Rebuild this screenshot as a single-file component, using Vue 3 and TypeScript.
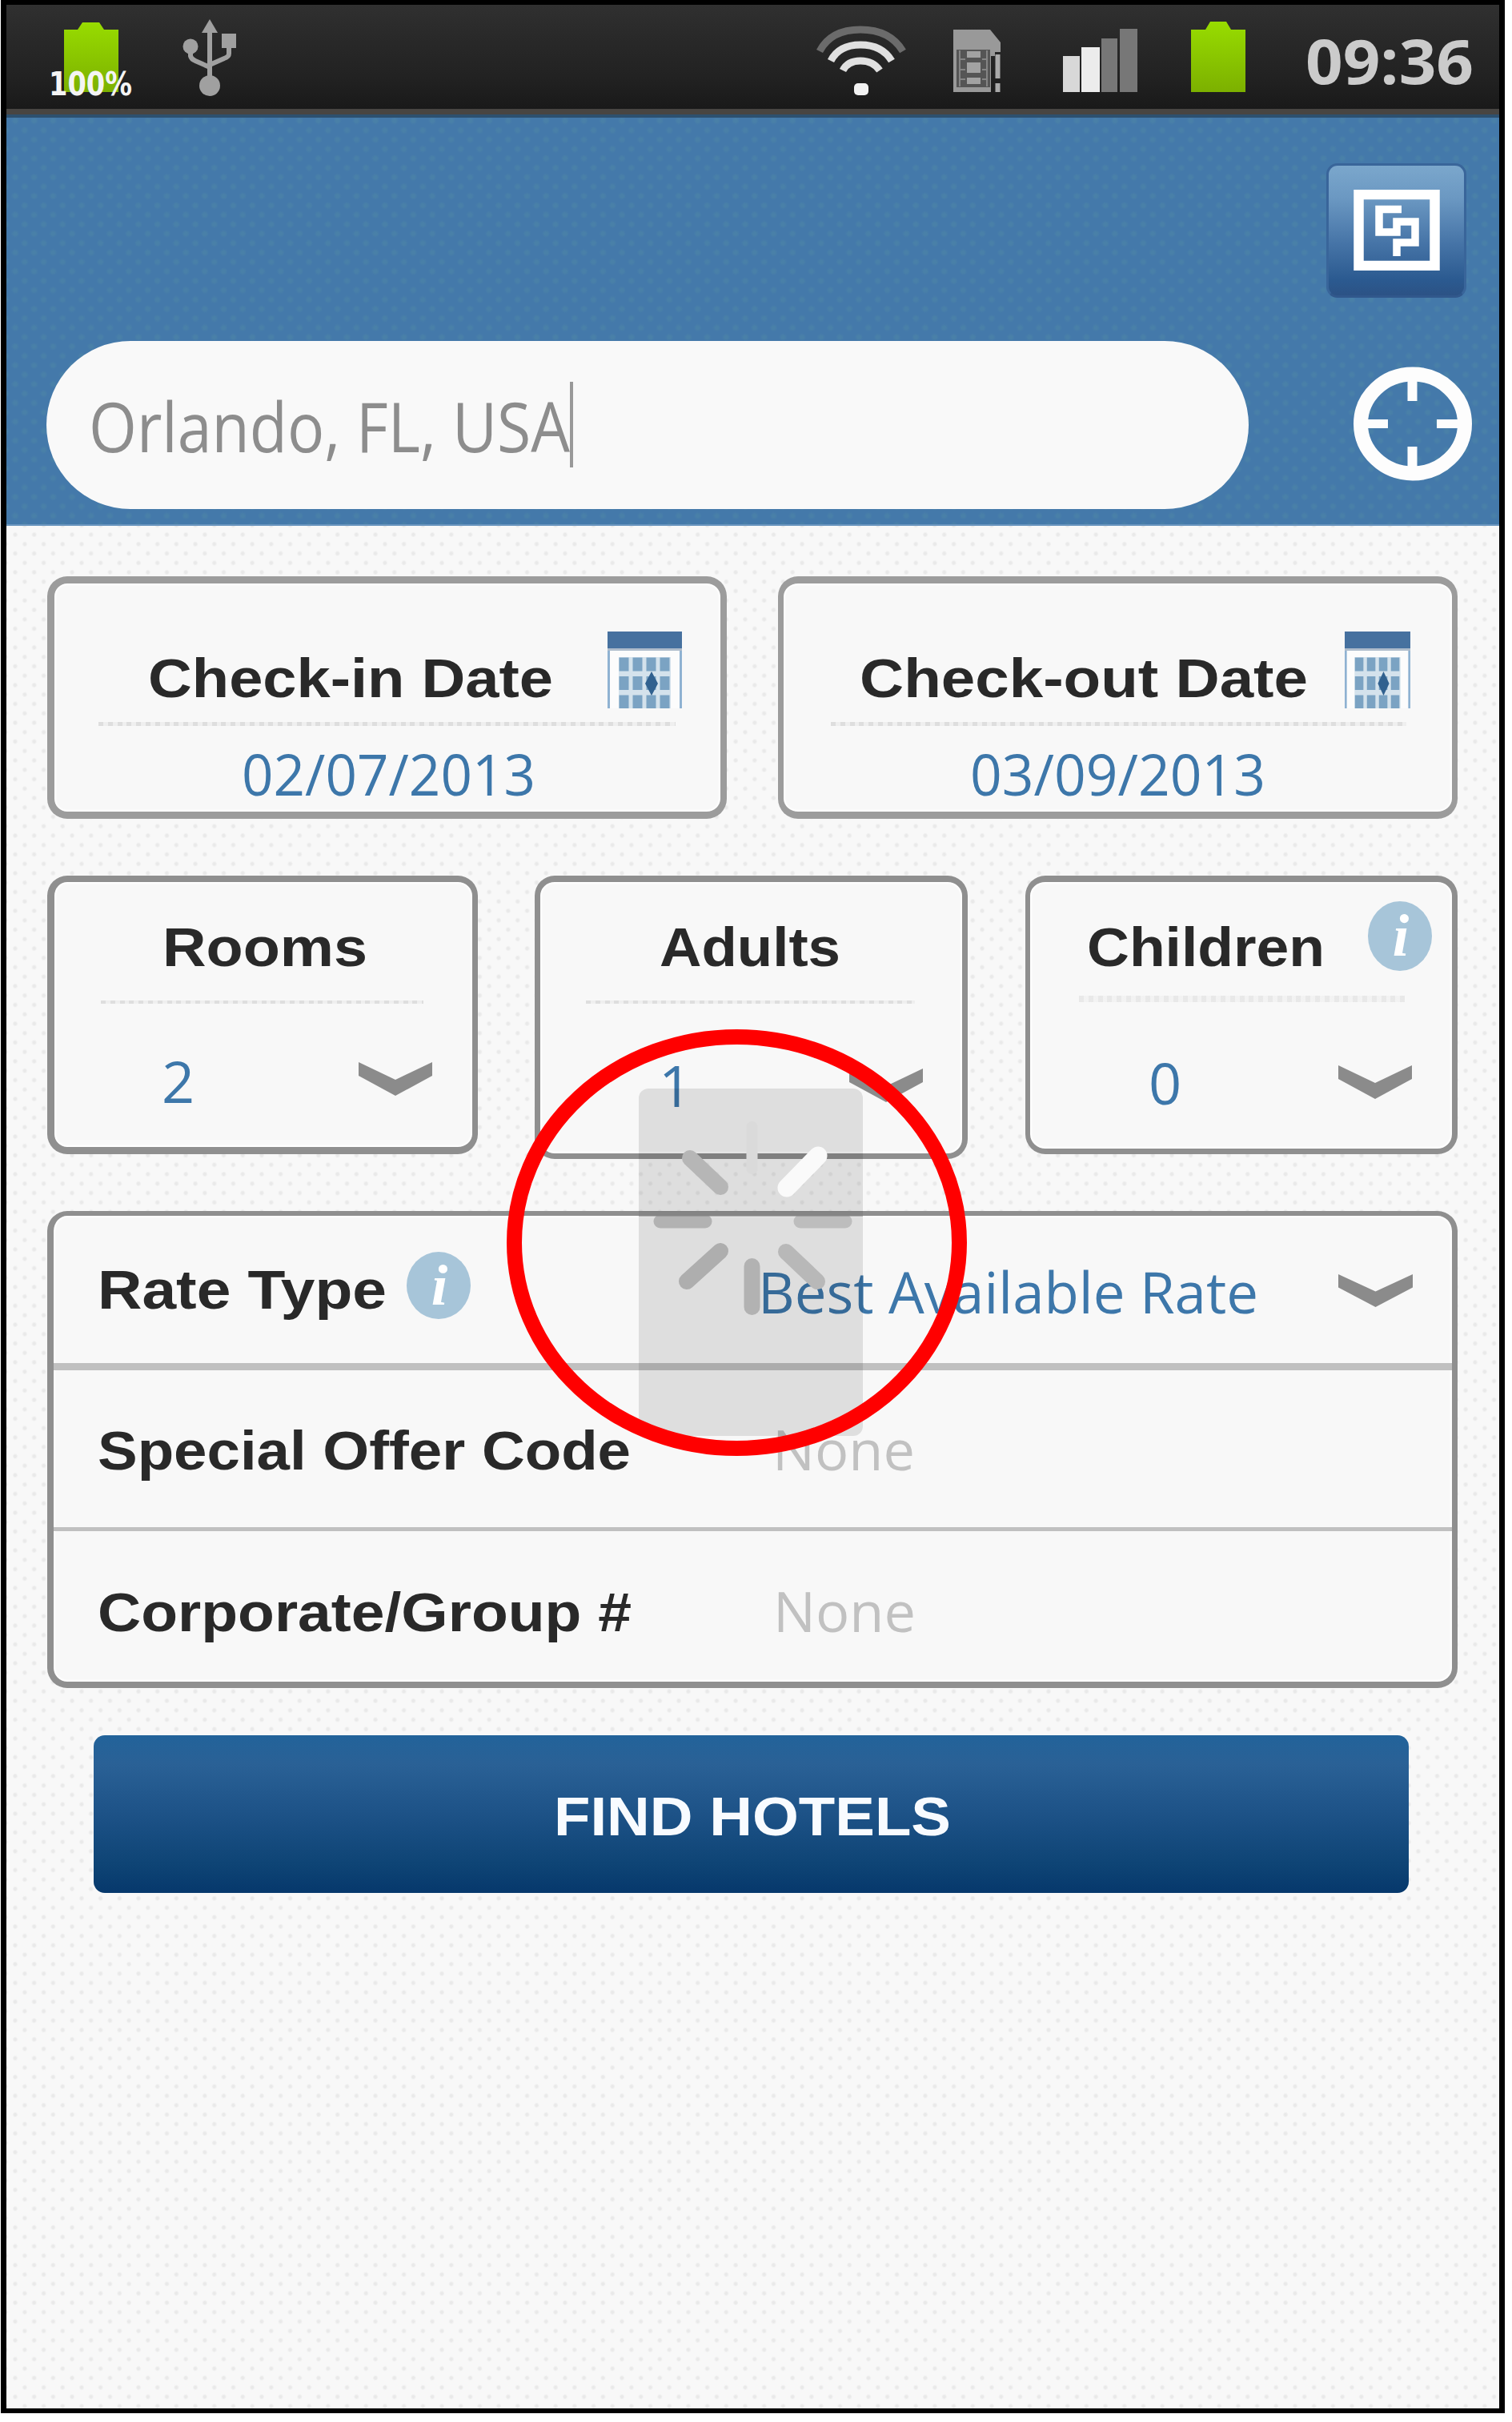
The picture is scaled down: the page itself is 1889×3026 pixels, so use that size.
<script setup lang="ts">
import type { Directive } from 'vue'

interface StayDate { key: string; label: string; labelWidth: number; value: string; valueWidth: number; iconWidth: number }
interface Guest { key: string; label: string; labelWidth: number; value: string; info?: boolean }

const dates: StayDate[] = [
  { key: 'checkin', label: 'Check-in Date', labelWidth: 506, value: '02/07/2013', valueWidth: 367, iconWidth: 93 },
  { key: 'checkout', label: 'Check-out Date', labelWidth: 560, value: '03/09/2013', valueWidth: 369, iconWidth: 82 },
]

const guests: Guest[] = [
  { key: 'rooms', label: 'Rooms', labelWidth: 256, value: '2' },
  { key: 'adults', label: 'Adults', labelWidth: 226, value: '1' },
  { key: 'children', label: 'Children', labelWidth: 297, value: '0', info: true },
]

// Stretches a line of text horizontally so that it takes exactly the given width.
const vFit: Directive<HTMLElement, number> = {
  mounted(el, { value }) {
    const natural = el.getBoundingClientRect().width
    el.style.transform = `scaleX(${value / natural})`
    el.style.marginRight = `${value - natural}px`
  },
}
</script>

<template>
  <div class="screen">
    <div class="status">
      <div class="charge">
        <svg width="68" height="88" viewBox="0 0 68 88">
          <defs>
            <linearGradient id="lime" x1="0" y1="0" x2="0" y2="1">
              <stop offset="0" stop-color="#98dc00" /><stop offset="1" stop-color="#7cb000" />
            </linearGradient>
          </defs>
          <path d="M0 10H17L23 1H44L50 10H68V88H0Z" fill="url(#lime)" />
        </svg>
        <span class="percent"><span v-fit="104" class="fit">100%</span></span>
      </div>
      <svg class="usb" width="68" height="98" viewBox="0 0 68 98" fill="none" stroke="#a0a0a0" stroke-width="6">
        <path d="M34 12V80M10 36V46Q11 50 16 52L34 60M58 30V43Q58 47 52 49L34 57" />
        <g fill="#a0a0a0" stroke="none">
          <path d="M34 0L44 17H24Z" /><circle cx="10" cy="34" r="9.5" /><rect x="49" y="18" width="18" height="18" /><circle cx="34" cy="83" r="13" />
        </g>
      </svg>
      <svg class="wifi" width="112" height="88" viewBox="0 0 112 88" fill="none">
        <path d="M4 33Q18 6 55 6T108 33" stroke="#6b6b6b" stroke-width="9" />
        <path d="M18 45Q28 25 55 25T94 45" stroke="#e0e0e0" stroke-width="9" />
        <path d="M33 57Q39 45 55 45T79 57" stroke="#e0e0e0" stroke-width="9" />
        <rect x="47" y="73" width="18" height="15" rx="5" fill="#f2f2f2" />
      </svg>
      <svg class="sim" width="62" height="78" viewBox="0 0 62 78">
        <path d="M0 0H46L59 16V28H52V33H47V78H0Z" fill="#999" />
        <rect x="4" y="25" width="42" height="47" fill="#555" />
        <g fill="#a2a2a2"><rect x="17" y="27" width="17" height="8" /><rect x="17" y="41" width="17" height="13" /><rect x="17" y="60" width="17" height="8" /></g>
        <path d="M8 26V71M42 26V71M8 37H15M8 50H15M8 62H15M36 37H42M36 50H42M36 62H42" stroke="#858585" stroke-width="2" />
        <path d="M55.500 31V61M55.500 67V78" stroke="#aaa" stroke-width="6" />
      </svg>
      <svg class="signal" width="93" height="79" viewBox="0 0 93 79">
        <path d="M0 34H21V79H0Z" fill="#d8d8d8" /><path d="M23 23H46V79H23Z" fill="#ececec" />
        <path d="M48 12H68V79H48ZM71 0H93V79H71Z" fill="#777" />
      </svg>
      <svg class="battery" width="68" height="88" viewBox="0 0 68 88">
        <path d="M0 10H18L24 0H44L50 10H68V88H0Z" fill="url(#lime)" />
      </svg>
      <span class="clock"><span v-fit="210" class="fit">09:36</span></span>
    </div>

    <header class="header">
      <div class="brand-row">
        <div class="brand">
          <svg width="108" height="101" viewBox="0 0 108 101" fill="none" stroke="#fff">
            <rect x="6.500" y="6" width="95" height="89" stroke-width="12.500" />
            <path d="M60 24.500H32V53H54V40H77V66H54V83" stroke-width="9.500" />
          </svg>
        </div>
      </div>
      <div class="search-row">
        <div class="search"><span v-fit="601" class="fit query">Orlando, FL, USA</span><i class="caret"></i></div>
        <svg class="locate" width="150" height="143" viewBox="0 0 150 143" fill="none" stroke="#fdfdfd">
          <ellipse cx="75" cy="71.500" rx="65" ry="62" stroke-width="18" />
          <path d="M74.500 15V43M74.500 100V130" stroke-width="12" /><path d="M15 71.500H44M105 71.500H135" stroke-width="11" />
        </svg>
      </div>
    </header>

    <main class="form">
      <section class="dates">
        <div v-for="d in dates" :key="d.key" class="card date" :class="d.key">
          <div class="head">
            <span v-fit="d.labelWidth" class="fit label">{{ d.label }}</span>
            <svg class="calendar" :width="d.iconWidth" height="96" viewBox="0 0 93 96" preserveAspectRatio="none">
              <rect x="1" y="1" width="91" height="95" fill="#fcfcfc" />
              <path d="M1.500 20V96M91.500 20V96" stroke="#8fb2d2" stroke-width="3" />
              <rect width="93" height="21" fill="#46719f" /><rect y="21" width="93" height="3" fill="#aebccb" />
              <rect x="14" y="32" width="65" height="64" fill="#d4e2ec" />
              <g fill="#7ba3c3">
                <template v-for="r in 3" :key="r"><rect v-for="c in 4" :key="c" :x="c * 17 - 2.500" :y="r * 23.500 + 9" width="12" height="17" /></template>
              </g>
              <path d="M55 50L63 65L55 80L47 65Z" fill="#31618f" />
            </svg>
          </div>
          <div class="rule"></div>
          <span v-fit="d.valueWidth" class="fit value">{{ d.value }}</span>
        </div>
      </section>

      <section class="guests">
        <div v-for="g in guests" :key="g.key" class="card guest" :class="g.key">
          <div class="head">
            <span v-fit="g.labelWidth" class="fit label">{{ g.label }}</span>
            <svg v-if="g.info" class="info" width="80" height="87" viewBox="0 0 80 87">
              <ellipse cx="40" cy="43.500" rx="40" ry="43.500" fill="#a7c5d9" /><text x="41" y="68" text-anchor="middle">i</text>
            </svg>
          </div>
          <div class="rule"></div>
          <div class="pick">
            <span class="value">{{ g.value }}</span>
            <svg class="chevron" width="94" height="42" viewBox="0 0 94 42"><path d="M1 0L47 22L93 0V17L47 42L1 17Z" fill="#8b8b8b" /></svg>
          </div>
        </div>
      </section>

      <section class="card panel">
        <div class="line rate">
          <span v-fit="361" class="fit label">Rate Type</span>
          <svg class="info" width="80" height="84" viewBox="0 0 80 87" preserveAspectRatio="none">
            <ellipse cx="40" cy="43.500" rx="40" ry="43.500" fill="#a7c5d9" /><text x="41" y="68" text-anchor="middle">i</text>
          </svg>
          <span v-fit="625" class="fit value">Best Available Rate</span>
          <svg class="chevron" width="95" height="41" viewBox="0 0 94 42" preserveAspectRatio="none"><path d="M1 0L47 22L93 0V17L47 42L1 17Z" fill="#8b8b8b" /></svg>
        </div>
        <div class="line offer"><span v-fit="666" class="fit label">Special Offer Code</span><span v-fit="178" class="fit none">None</span></div>
        <div class="line corporate"><span v-fit="667" class="fit label">Corporate/Group #</span><span v-fit="178" class="fit none">None</span></div>
      </section>

      <button class="find"><span v-fit="496" class="fit">FIND HOTELS</span></button>
    </main>

    <svg class="loading" width="575" height="534" viewBox="633 1286 575 534" fill="none">
      <rect x="798" y="1360" width="280" height="434" rx="12" fill="#000" fill-opacity=".1" />
      <g stroke-width="20" stroke-linecap="round">
        <path d="M939.500 1408V1460" stroke="#dadada" stroke-width="14" />
        <path d="M1022 1444L983 1484" stroke="#fafafa" stroke-width="23" />
        <path d="M1000 1526H1056" stroke="#bdbdbd" stroke-width="17" />
        <path d="M982 1564L1021 1601" stroke="#b8b8b8" />
        <path d="M939.500 1582V1633" stroke="#b2b2b2" />
        <path d="M900 1563L858 1601" stroke="#aeaeae" />
        <path d="M825 1526H881" stroke="#b2b2b2" stroke-width="17" />
        <path d="M862 1447L900 1483" stroke="#b6b6b6" />
      </g>
      <path d="M798 1517H1078" stroke="#858585" stroke-width="5" />
      <ellipse cx="920.500" cy="1552.500" rx="278" ry="257" stroke="#f00" stroke-width="19" />
    </svg>
  </div>
</template>

<style>
body { margin: 0; background: #fff; }
</style>

<style scoped>
.screen {
  box-sizing: border-box; position: relative; width: 1879px; height: 3015px; margin: 0 0 11px 1px;
  border: solid #000; border-width: 6px 7px; overflow: hidden;
  background-color: #f8f8f8;
  background-image: radial-gradient(circle, #e9e9e9 1.5px, transparent 3.5px), radial-gradient(circle, #e9e9e9 1.5px, transparent 3.5px);
  background-size: 23.7px 23.5px; background-position: 11px 4px, 22.800px 15.700px;
  font-family: "Open Sans", "Noto Sans", sans-serif;
}
.screen svg { display: block; flex: none; }
.fit { display: inline-block; white-space: nowrap; transform-origin: 0 50%; flex: none; }

.status {
  box-sizing: border-box; height: 141px; display: flex; align-items: flex-start; border-bottom: 4px solid #2d506f;
  background: linear-gradient(#303030, #292929 30%, #222 65%, #181818);
  box-shadow: inset 0 -7px #484542;
}
.charge { position: relative; margin: 21px 0 0 72px; }
.percent {
  position: absolute; left: -19px; top: 57px; color: #f4f4f4;
  font: bold 41px/42px "DejaVu Sans", sans-serif;
}
.usb { margin: 18px 0 0 80px; }
.wifi { margin: 25px 0 0 724px; }
.sim { margin: 31px 0 0 59px; }
.signal { margin: 30px 0 0 75px; }
.battery { margin: 21px 0 0 67px; }
.clock { margin: 31px 0 0 75px; font-size: 77px; line-height: 77px; font-weight: 700; color: #cbcbcb; height: 77px; }

.header {
  height: 510px; display: flex; flex-direction: column;
  background-color: #4479aa;
  background-image: radial-gradient(circle, #4980a8 2px, transparent 5px), radial-gradient(circle, #4980a8 2px, transparent 5px);
  background-size: 23.7px 23.5px; background-position: 11px 4px, 22.800px 15.700px;
  box-shadow: inset 0 -2px #6b96bf;
}
.brand-row { display: flex; justify-content: flex-end; margin: 57px 41px 0 0; }
.brand {
  box-sizing: border-box; width: 175px; height: 168px; border: 3px solid #39659a; border-bottom-color: #31588c; border-radius: 14px;
  background: linear-gradient(#7ba7cc, #6b98c2 25%, #4674a7 60%, #2b5a90 88%, #2c5285);
  display: flex; justify-content: center; padding-top: 30px;
}
.search-row { display: flex; margin: 54px 0 0 50px; align-items: flex-start; }
.search { box-sizing: border-box; width: 1502px; height: 210px; border-radius: 105px; background: #f9f9f9; display: flex; padding: 51px 0 0 53px; }
.query { font-size: 86px; line-height: 106px; height: 106px; color: #8d8d8d; margin-top: 2px; }
.caret { width: 4px; height: 107px; background: #999; }
.locate { margin: 32px 0 0 130px; }

.form { padding: 63px 0 0 51px; }
.card { box-sizing: border-box; background: #f8f8f8; border: solid #949494; border-radius: 25px; flex: none; box-shadow: inset 0 0 2px 2px #fff; }
.label { font: bold 69px/68px "Liberation Sans", sans-serif; color: #292929; height: 68px; }
.value { font-size: 72px; line-height: 72px; height: 72px; color: #3d77aa; }
.rule { height: 5px; background: repeating-linear-gradient(90deg, #dedede 0 6px, #efefef 6px 11.800px); }
.head { display: flex; align-items: flex-start; }
.info text { font: italic bold 74px "Liberation Serif", serif; fill: #fff; }

.dates { display: flex; gap: 64px; }
.date { height: 303px; border-color: #9c9c9c; }
.date .head { height: 172px; }
.date .head .label { margin-top: 84px; }
.date > .value { margin-top: 23px; }
.calendar { margin: 59px 0 0 auto; }
.checkin { width: 849px; border-width: 9px 8px 9px 9px; }
.date .head { padding-top: 1px; box-sizing: border-box; height: 173px; }
.checkin .label { margin-left: 117px; }
.checkin .calendar { margin-right: 48px; }
.checkin .rule { width: 721px; margin-left: 55px; }
.checkin > .value { margin-left: 234px; }
.checkout { width: 849px; border-width: 9px 7px; }
.checkout .label { margin-left: 95px; }
.checkout .calendar { margin-right: 52px; }
.checkout .rule { width: 719px; margin-left: 59px; }
.checkout > .value { margin-left: 233px; }

.guests { display: flex; align-items: flex-start; height: 348px; margin-top: 71px; }
.guest { height: 348px; width: 538px; border-color: #8f8f8f; }
.guest .head { height: 148px; }
.guest .head .label { margin-top: 48px; }
.pick { display: flex; align-items: flex-start; }
.rooms { border-width: 8px 7px 9px 9px; }
.rooms .label { margin-left: 135px; }
.rooms .rule { margin-left: 58px; width: 403px; height: 4px; }
.rooms .value { margin: 60px 0 0 134px; width: 41px; }
.rooms .chevron { margin: 73px 0 0 204px; }
.adults { width: 541px; height: 354px; margin-left: 71px; border-width: 8px 7px 7px; }
.adults .label { margin-left: 149px; }
.adults .rule { margin-left: 57px; width: 411px; height: 4px; }
.adults .value { margin: 65px 0 0 148px; width: 41px; }
.adults .chevron { margin: 81px 0 0 196px; }
.children { width: 540px; margin-left: 72px; border-width: 8px 7px 7px 6px; }
.children .label { margin-left: 71px; }
.children .info { margin: 24px 0 0 54px; }
.children .head { height: 142px; }
.children .rule { margin-left: 61px; width: 407px; height: 8px; opacity: .6; }
.children .value { margin: 64px 0 0 148px; width: 41px; }
.children .chevron { margin: 79px 0 0 195px; }

.panel { width: 1762px; height: 596px; margin-top: 71px; border-width: 6px 7px 8px 8px; border-color: #8f8f8f; }
.line { box-sizing: border-box; display: flex; align-items: flex-start; padding-left: 55px; }
.rate { height: 193px; border-bottom: 9px solid #c0c0c0; }
.rate .label { margin: 59px 0 0; }
.rate .info { margin: 45px 0 0 25px; }
.rate .value { margin-top: 58px; margin-left: 359px; }
.rate .chevron { margin: 73px 0 0 99px; }
.offer { height: 201px; border-bottom: 5px solid #c0c0c0; }
.offer .label { margin-top: 67px; }
.corporate .label { margin-top: 68px; }
.none { font-size: 69px; line-height: 70px; height: 70px; color: #c1c1c1; margin-left: 177px; }
.offer .none { margin-top: 63px; }
.corporate .none { margin-top: 64px; }

.find {
  display: flex; align-items: center; justify-content: center; box-sizing: border-box; width: 1643px; height: 197px; margin: 59px 0 0 58px;
  padding: 6px 0 0 2px; border: 0; border-radius: 14px; color: #f8fbff;
  background: linear-gradient(#22639a, #2a6196 18%, #1d5287 50%, #0e4475 82%, #06386c);
  font: bold 69px/70px "Liberation Sans", sans-serif;
}

.loading { position: absolute; left: 625px; top: 1280px; }
</style>
